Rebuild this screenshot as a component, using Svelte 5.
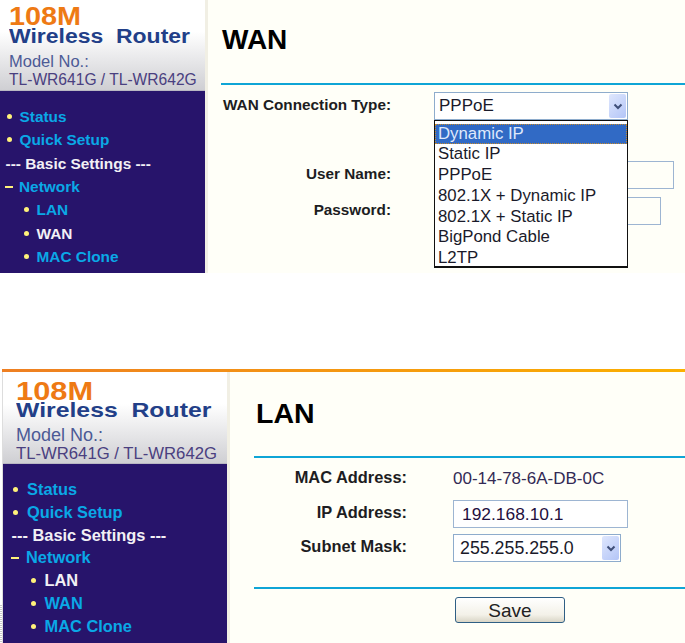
<script>
  const menu = [
    { t: 'Status', m: 'dot' },
    { t: 'Quick Setup', m: 'dot' },
    { t: '--- Basic Settings ---', m: 'title' },
    { t: 'Network', m: 'dash' },
    { t: 'LAN', m: 'sub' },
    { t: 'WAN', m: 'sub' },
    { t: 'MAC Clone', m: 'sub' }
  ];
  const options = ['Dynamic IP', 'Static IP', 'PPPoE', '802.1X + Dynamic IP', '802.1X + Static IP', 'BigPond Cable', 'L2TP'];
</script>

{#snippet sidebar(active, cls)}
  <aside class="side {cls}">
    <div class="brand">
      <div class="b108">108M</div>
      <div class="bwr">Wireless&nbsp;&nbsp;Router</div>
      <div class="bmodel">Model No.:</div>
      <div class="bmodels">TL-WR641G / TL-WR642G</div>
    </div>
    <ul class="menu">
      {#each menu as i}
        <li class={i.m} class:on={i.t === active}>
          {#if i.m === 'dot' || i.m === 'sub'}<span class="bullet"></span>{/if}
          {#if i.m === 'dash'}<span class="minus"></span>{/if}
          <span>{i.t}</span>
        </li>
      {/each}
    </ul>
  </aside>
{/snippet}

{#snippet arrow()}
  <span class="arrow">
    <svg width="10" height="7" viewBox="0 0 10 7"><path d="M1.5 1.5 L5 5 L8.5 1.5" fill="none" stroke="#3f4f78" stroke-width="2"/></svg>
  </span>
{/snippet}

<div class="page">
  <span class="dots"></span>
  <section class="panel top">
    {@render sidebar('WAN', 'small')}
    <main class="content">
      <h1>WAN</h1>
      <hr />
      <div class="rows wan">
        <div class="row r1">
          <label>WAN Connection Type:</label>
          <div class="sel sel1"><span>PPPoE</span>{@render arrow()}</div>
          <ul class="drop">
            {#each options as o, idx}
              <li class:hi={idx === 0}>{o}</li>
            {/each}
          </ul>
        </div>
        <div class="row r2"><label>User Name:</label><div class="inp in1"></div></div>
        <div class="row r3"><label>Password:</label><div class="inp in2"></div></div>
      </div>
    </main>
  </section>

  <section class="panel bottom">
    {@render sidebar('LAN', 'large')}
    <main class="content">
      <h1>LAN</h1>
      <hr />
      <div class="rows lan">
        <div class="row l1"><label>MAC Address:</label><span class="val">00-14-78-6A-DB-0C</span></div>
        <div class="row l2"><label>IP Address:</label><div class="inp in3">192.168.10.1</div></div>
        <div class="row l3"><label>Subnet Mask:</label><div class="sel sel2"><span>255.255.255.0</span>{@render arrow()}</div></div>
      </div>
      <hr class="second" />
      <div class="actions"><button>Save</button></div>
    </main>
  </section>
</div>

<style>
  :global(body) { margin: 0; background: #fff; }
  .page { position: relative; width: 685px; height: 643px; overflow: hidden; font-family: "Liberation Sans", Arial, sans-serif; }
  .dots { position: absolute; left: 0; top: 605px; width: 2px; height: 38px; background: repeating-linear-gradient(#c8c8c8 0 1px, #fff 1px 2px); }
  .panel { display: flex; background: #fffff8; height: 273px; overflow: hidden; }
  .panel.bottom { margin: 96px 0 0 2px; height: 271px; border-top: 3px solid; border-image: linear-gradient(90deg, #ee7f22, #fbb000) 1; }
  .side { flex: none; border-right: 3px solid #f1efe4; display: flex; flex-direction: column; background: #27146b; }
  .side.small { width: 205px; }
  .side.large { width: 224px; border-left: 1px solid #ddd; }
  .brand { height: 91px; box-sizing: border-box; background: linear-gradient(#fff 0, #fff 35%, #cfcfd3 100%); border-bottom: 1px solid #b9b7c2; padding: 6px 0 0 9px; }
  .large .brand { padding: 9px 0 0 13px; height: 92px; }
  .b108 { color: #ee7a14; font-weight: 700; font-size: 26px; line-height: 20px; transform: scaleX(1.108); transform-origin: left; }
  .large .b108 { transform: scaleX(1.185); }
  .bwr { color: #223f88; font-weight: 700; font-size: 20px; line-height: 20px; white-space: nowrap; transform: scaleX(1.148); transform-origin: left; }
  .large .bwr { margin-top: -1px; font-size: 21px; transform: scaleX(1.18); }
  .bmodel { color: #4c5a96; font-size: 16.5px; line-height: 20px; margin-top: 5px; }
  .bmodels { color: #4a4080; font-size: 15.6px; line-height: 19px; margin-top: -1px; white-space: nowrap; }
  .large .bmodels { font-size: 16.7px; margin-top: -1.5px; }
  .large .bmodel { font-size: 18px; }

  .menu { list-style: none; margin: 0; padding: 14px 0 0; flex: 1; font-weight: 700; font-size: 15.4px; }
  .large .menu { font-size: 16.4px; padding-top: 14.2px; }
  .menu li { height: 23.33px; line-height: 23px; display: flex; align-items: center; color: #0aa8e6; white-space: nowrap; }
  .large .menu li { height: 22.8px; }
  .menu li.on, .menu li.title { color: #f2f0f5; }
  .menu li.dot { padding-left: 6.5px; }
  .menu li.sub { padding-left: 23.5px; }
  .menu li.dash { padding-left: 5px; }
  .menu li.title { padding-left: 5.5px; }
  .large .menu li.dot { padding-left: 10px; }
  .large .menu li.sub { padding-left: 27.5px; }
  .large .menu li.dash { padding-left: 8px; }
  .large .menu li.title { padding-left: 8.5px; }
  .bullet { width: 5px; height: 5px; border-radius: 50%; background: #fff27a; margin-right: 8px; flex: none; }
  .large .bullet { margin-right: 9px; }
  .minus { width: 8px; height: 2px; background: #fff27a; margin-right: 6px; flex: none; }
  .large .minus { margin-right: 7px; }

  .content { flex: 1; min-width: 0; color: #111; padding-left: 13px; background: #fffff8; }
  h1 { margin: 0; font-size: 28px; line-height: 31px; font-weight: 700; color: #000; padding: 23px 0 0 1px; }
  .top h1 { padding-top: 24px; }
  hr { border: 0; height: 2px; background: #0fa5d6; margin: 0; }
  .top hr { margin-top: 28px; }
  .rows { position: relative; }
  .row { display: flex; align-items: center; position: relative; }
  label { display: block; font-weight: 700; color: #1d1d22; text-align: right; white-space: nowrap; font-size: 15.3px; margin-bottom: 2.5px; }
  .wan label { width: 170px; flex: none; margin-right: 43px; }
  .r1 { height: 28px; margin-top: 7px; }
  .r2 { height: 28px; margin-top: 41px; }
  .r3 { height: 28px; margin-top: 8px; }
  .sel { box-sizing: border-box; height: 28px; border: 1px solid #8eaccc; background: #fff; display: flex; align-items: center; justify-content: space-between; font-size: 17px; color: #1a1a2a; padding: 0 1px 0 4px; }
  .sel1 { width: 194px; }
  .sel2 { width: 168px; padding-left: 6px; font-size: 17.8px; }
  .arrow { width: 17px; height: 24px; background: linear-gradient(135deg, #dfe7fd, #b3c5f7); border-radius: 2px; display: flex; align-items: center; justify-content: center; }
  .inp { box-sizing: border-box; height: 28px; border: 1px solid #9db5d2; background: #fffff8; font-size: 17.4px; color: #1f1040; }
  .in1 { width: 240px; }
  .in2 { width: 227px; }
  .in3 { width: 175px; background: #fff; padding-left: 8px; line-height: 26px; }
  .drop { position: absolute; left: 213px; top: 28px; width: 194px; height: 148px; box-sizing: border-box; list-style: none; margin: 0; padding: 2.5px 0 0; background: #fff; border: 1px solid #111; border-bottom-width: 2px; font-size: 16.8px; color: #1a1a2a; z-index: 2; }
  .drop li { height: 20.8px; line-height: 20.8px; padding-left: 3px; white-space: nowrap; }
  .drop li.hi { background: #316ac5; color: #dfe8fb; outline: 1px dotted #c98a2a; outline-offset: -1px; }

  .bottom .content { padding-left: 24px; }
  .bottom h1 { padding: 26px 0 0 2px; font-size: 28.5px; }
  .bottom hr { margin-top: 27px; }
  .lan label { width: 153px; flex: none; margin-right: 46px; font-size: 16.4px; }
  .l1 { height: 28px; margin-top: 7px; }
  .l2 { height: 28px; margin-top: 7px; }
  .l3 { height: 28px; margin-top: 6px; }
  .val { color: #332a55; font-size: 17px; }
  .bottom hr.second { margin-top: 25px; }
  .actions { padding: 8px 0 0 201px; }
  button { width: 110px; height: 26px; box-sizing: border-box; border: 1px solid #2f5f85; border-radius: 3px; background: linear-gradient(#fff, #f3f1e8 70%, #d9d5c6); font: 19px "Liberation Sans", Arial, sans-serif; color: #222; padding: 1px 0 0; }
</style>
